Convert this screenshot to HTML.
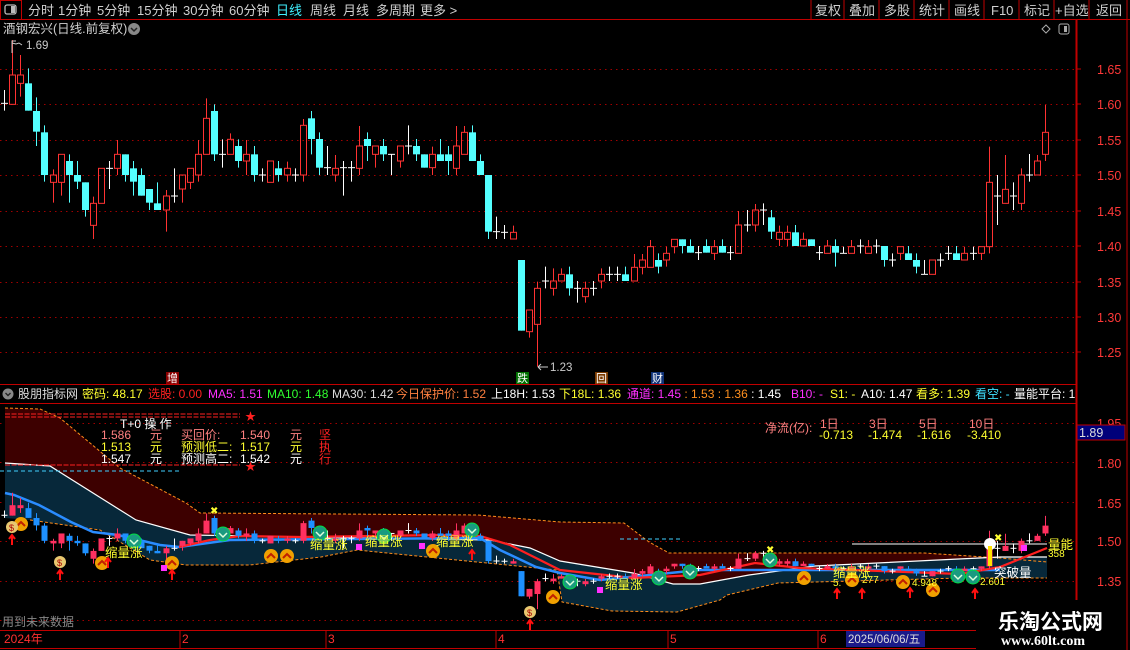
<!DOCTYPE html>
<html><head><meta charset="utf-8">
<style>
html,body{margin:0;padding:0;background:#000;width:1130px;height:650px;overflow:hidden;font-family:"Liberation Sans","Noto Sans CJK SC",sans-serif}
svg{position:absolute;left:0;top:0}
text{font-family:"Liberation Sans","Noto Sans CJK SC",sans-serif}
</style></head><body>
<svg id="s" width="1130" height="650" xmlns="http://www.w3.org/2000/svg">
<rect width="1130" height="650" fill="#000"/>
<line x1="0" y1="19.5" x2="1130" y2="19.5" stroke="#c00000"/>
<rect x="0.5" y="0.5" width="21" height="19" fill="none" stroke="#c00000"/>
<rect x="5" y="5" width="11" height="9" rx="2" fill="none" stroke="#bbb" stroke-width="1.3"/>
<rect x="11" y="6" width="4" height="7" fill="#bbb"/>
<g font-size="13" fill="#d0d0d0">
<text x="28" y="15">分时</text><text x="58" y="15">1分钟</text><text x="97" y="15">5分钟</text><text x="137" y="15">15分钟</text><text x="183" y="15">30分钟</text><text x="229" y="15">60分钟</text>
<text x="276" y="15" fill="#40f0ff">日线</text><text x="310" y="15">周线</text><text x="343" y="15">月线</text><text x="376" y="15">多周期</text><text x="420" y="15">更多 &gt;</text>
<text x="815" y="15">复权</text><text x="849" y="15">叠加</text><text x="884" y="15">多股</text><text x="919" y="15">统计</text><text x="954" y="15">画线</text><text x="991" y="15">F10</text><text x="1024" y="15">标记</text><text x="1055" y="15">+自选</text><text x="1096" y="15">返回</text>
</g>
<g stroke="#c00000"><line x1="811" y1="0" x2="811" y2="19"/><line x1="844" y1="0" x2="844" y2="19"/><line x1="879" y1="0" x2="879" y2="19"/><line x1="914" y1="0" x2="914" y2="19"/><line x1="949" y1="0" x2="949" y2="19"/><line x1="984" y1="0" x2="984" y2="19"/><line x1="1019" y1="0" x2="1019" y2="19"/><line x1="1054" y1="0" x2="1054" y2="19"/><line x1="1089" y1="0" x2="1089" y2="19"/><line x1="1127" y1="0" x2="1127" y2="650"/></g>
<text x="3" y="33" font-size="12.5" fill="#d0d0d0">酒钢宏兴(日线.前复权)</text>
<circle cx="134" cy="29" r="6" fill="#888"/><path d="M131 28l3 3 3-3" stroke="#222" stroke-width="1.5" fill="none"/>
<path d="M1042 29l4-4 4 4-4 4z" fill="none" stroke="#aaa"/>
<rect x="1059" y="24" width="10" height="10" rx="2" fill="none" stroke="#aaa"/><rect x="1064" y="26" width="3" height="6" fill="#aaa"/>
<line x1="1076.5" y1="20" x2="1076.5" y2="628" stroke="#c00000" stroke-width="2"/>
<g id="grid" stroke="#a00000" stroke-dasharray="1.5,4"></g>
<g font-size="12.5" fill="#ff3838">
<text x="1097" y="74">1.65</text><text x="1097" y="109">1.60</text><text x="1097" y="145">1.55</text><text x="1097" y="180">1.50</text><text x="1097" y="216">1.45</text><text x="1097" y="251">1.40</text><text x="1097" y="287">1.35</text><text x="1097" y="322">1.30</text><text x="1097" y="357">1.25</text>
<text x="1097" y="428">1.95</text><text x="1097" y="468">1.80</text><text x="1097" y="508">1.65</text><text x="1097" y="546">1.50</text><text x="1097" y="586">1.35</text>
</g>
<g stroke="#c00000"><line x1="1077" y1="69" x2="1081" y2="69"/><line x1="1077" y1="104" x2="1081" y2="104"/><line x1="1077" y1="140" x2="1081" y2="140"/><line x1="1077" y1="175" x2="1081" y2="175"/><line x1="1077" y1="211" x2="1081" y2="211"/><line x1="1077" y1="246" x2="1081" y2="246"/><line x1="1077" y1="282" x2="1081" y2="282"/><line x1="1077" y1="317" x2="1081" y2="317"/><line x1="1077" y1="352" x2="1081" y2="352"/></g>
<rect x="1077" y="425" width="48" height="15" fill="#00007a" stroke="#c00000"/>
<text x="1079" y="437" font-size="12.5" fill="#ddd">1.89</text>
<polygon fill="#3d0000" points="5,408 40,409 60,418 120,468 186,503 200,513 478,515 560,522 624,523 649,542 669,553 924,553 1000,558 1047,562 1047,557 1000,557 815,566 749,575 700,584 673,584 633,573 560,561 530,548 490,540 190,535 136,520 50,466 5,463"/>
<polygon fill="#07283a" points="5,463 50,466 136,520 190,535 490,540 530,548 560,561 633,573 673,584 700,584 749,575 815,566 1000,557 1047,557 1047,578 960,578 815,582 778,583 727,595 720,600 677,612 612,611 562,602 557,570 357,550 321,557 250,565 186,565 150,560 100,530 30,520 5,518"/>
<polyline fill="none" stroke="#ff8c1a" stroke-width="1" stroke-dasharray="3,2" points="5,408 40,409 60,418 120,468 186,503 200,513 478,515 560,522 624,523 649,542 669,553 924,553 1000,558 1047,562"/>
<polyline fill="none" stroke="#ff8c1a" stroke-width="1" stroke-dasharray="3,2" points="30,520 100,530 150,560 186,565 250,565 321,557 357,550 557,570 562,602 612,611 677,612 720,600 727,595 778,583 815,582 960,578 1047,578"/>
<polyline fill="none" stroke="#fff" stroke-width="1.2" points="5,463 50,466 136,520 190,535 490,540 530,548 560,561 633,573 673,584 700,584 749,575 815,566 1000,557 1047,557"/>
<polyline fill="none" stroke="#2a8cff" stroke-width="2.5" points="5,493 14,495 39,505 71,522 93,532 118,535 160,545 179,547 230,540 480,538 500,550 536,567 560,573 600,580 640,576 700,570 1000,570"/>
<polyline fill="none" stroke="#ff2020" stroke-width="2.2" points="179,547 210,540 240,536 300,537 440,535 480,536 510,545 560,570 633,578 700,575 755,563 800,568 960,574 1000,567 1047,548"/>
<line x1="5" y1="414" x2="240" y2="414" stroke="#ff2020" stroke-dasharray="5,1.5"/><line x1="5" y1="417" x2="240" y2="417" stroke="#ff2020" stroke-dasharray="5,1.5"/>
<line x1="5" y1="465" x2="240" y2="465" stroke="#ff2020" stroke-dasharray="5,1.5"/>
<text x="245" y="420" font-size="11" fill="#ff2020">★</text><text x="245" y="470" font-size="11" fill="#ff2020">★</text>
<line x1="0" y1="471" x2="180" y2="471" stroke="#40d0ff" stroke-dasharray="4,3"/>
<line x1="620" y1="539" x2="680" y2="539" stroke="#40d0ff" stroke-dasharray="4,3"/>
<line x1="852" y1="544" x2="1047" y2="544" stroke="#fff"/>
<g id="cand"></g>
<g id="low"></g>
<g id="icons"></g>
<g font-size="12.5" fill="#ffff30">
<text x="105" y="557">缩量涨</text><text x="310" y="549">缩量涨</text><text x="365" y="546">缩量涨</text><text x="436" y="546">缩量涨</text><text x="605" y="589">缩量涨</text><text x="833" y="577">缩量涨</text><text x="1048" y="549">量能</text>
<text x="1048" y="557" font-size="10">358</text>
<text x="833" y="586" font-size="10">5.</text><text x="862" y="583" font-size="10">277</text><text x="912" y="586" font-size="10">4.948</text><text x="980" y="585" font-size="10">2.601</text>
</g>
<text x="994" y="577" font-size="12.5" fill="#fff">突破量</text>
<circle cx="990" cy="544" r="6" fill="#fff"/>
<rect x="988" y="546" width="4" height="20" fill="#ffe000"/>
<line x1="0" y1="384.5" x2="1076" y2="384.5" stroke="#c00000"/>
<line x1="0" y1="403.5" x2="1076" y2="403.5" stroke="#c00000"/>
<circle cx="8" cy="394" r="5.5" fill="#888"/><path d="M5.5 393l2.5 2.5 2.5-2.5" stroke="#222" stroke-width="1.4" fill="none"/>
<g font-size="12">
<text x="18" y="398" fill="#ddd">股朋指标网</text>
<text x="82" y="398" fill="#ffff30">密码: 48.17</text>
<text x="148" y="398" fill="#ff2020">选股: 0.00</text>
<text x="208" y="398" fill="#ff30ff">MA5: 1.51</text>
<text x="267" y="398" fill="#30ff30">MA10: 1.48</text>
<text x="332" y="398" fill="#ddd">MA30: 1.42</text>
<text x="396" y="398" fill="#ff8040">今日保护价: 1.52</text>
<text x="491" y="398" fill="#fff">上18H: 1.53</text>
<text x="559" y="398" fill="#ffff30">下18L: 1.36</text>
<text x="627" y="398" fill="#ff30ff">通道: <tspan fill="#ff30ff">1.45</tspan><tspan fill="#ff9020"> : 1.53 : 1.36</tspan><tspan fill="#fff"> : 1.45</tspan></text>
<text x="791" y="398" fill="#ff30ff">B10: -</text>
<text x="830" y="398" fill="#ffff30">S1: -</text>
<text x="861" y="398" fill="#fff">A10: 1.47</text>
<text x="916" y="398" fill="#ffff30">看多: 1.39</text>
<text x="975" y="398" fill="#40e0ff">看空: -</text>
<text x="1014" y="398" fill="#fff">量能平台: 1</text>
</g>
<g font-size="12">
<text x="120" y="428" fill="#fff">T+0 操 作</text>
<text x="101" y="439" fill="#ff8080">1.586</text><text x="150" y="439" fill="#ff8080">元</text><text x="181" y="439" fill="#ff8080">买回价:</text><text x="240" y="439" fill="#ff8080">1.540</text><text x="290" y="439" fill="#ff8080">元</text><text x="319" y="439" fill="#ff2020">坚</text>
<text x="101" y="451" fill="#ffff30">1.513</text><text x="150" y="451" fill="#ffff30">元</text><text x="181" y="451" fill="#ffff30">预测低二:</text><text x="240" y="451" fill="#ffff30">1.517</text><text x="290" y="451" fill="#ffff30">元</text><text x="319" y="451" fill="#ff2020">执</text>
<text x="101" y="463" fill="#fff">1.547</text><text x="150" y="463" fill="#fff">元</text><text x="181" y="463" fill="#fff">预测高二:</text><text x="240" y="463" fill="#fff">1.542</text><text x="290" y="463" fill="#fff">元</text><text x="319" y="463" fill="#ff2020">行</text>
<text x="765" y="432" fill="#ff8080">净流(亿):</text>
<text x="820" y="428" fill="#ff8080">1日</text><text x="869" y="428" fill="#ff8080">3日</text><text x="919" y="428" fill="#ff8080">5日</text><text x="969" y="428" fill="#ff8080">10日</text>
<text x="819" y="439" fill="#ffff30">-0.713</text><text x="868" y="439" fill="#ffff30">-1.474</text><text x="917" y="439" fill="#ffff30">-1.616</text><text x="967" y="439" fill="#ffff30">-3.410</text>
</g>
<text x="2" y="626" font-size="12" fill="#888">用到未来数据</text>
<text x="26" y="49" font-size="11.5" fill="#ccc">1.69</text><path d="M12 53V41h4m-4 2l4 1 3-1 3 2" stroke="#ccc" fill="none"/>
<text x="550" y="371" font-size="11.5" fill="#ccc">1.23</text><path d="M538 367h10m-10 0l3-3m-3 3l3 3" stroke="#ccc" fill="none"/>
<rect x="166" y="372" width="13" height="12" fill="#8b0000"/><text x="167" y="382" font-size="11" fill="#fff">增</text>
<rect x="516" y="372" width="13" height="12" fill="#007000"/><text x="517" y="382" font-size="11" fill="#fff">跌</text>
<rect x="595" y="372" width="13" height="12" fill="#7a3a00"/><text x="596" y="382" font-size="11" fill="#fff">回</text>
<rect x="651" y="372" width="13" height="12" fill="#113377"/><text x="652" y="382" font-size="11" fill="#fff">财</text>
<line x1="0" y1="630.5" x2="976" y2="630.5" stroke="#c00000"/>
<line x1="0" y1="648.5" x2="976" y2="648.5" stroke="#c00000"/>
<g stroke="#c00000"><line x1="180" y1="631" x2="180" y2="648"/><line x1="326" y1="631" x2="326" y2="648"/><line x1="496" y1="631" x2="496" y2="648"/><line x1="668" y1="631" x2="668" y2="648"/><line x1="818" y1="631" x2="818" y2="648"/></g>
<g font-size="12" fill="#ff3030"><text x="4" y="643">2024年</text><text x="182" y="643">2</text><text x="328" y="643">3</text><text x="498" y="643">4</text><text x="670" y="643">5</text><text x="820" y="643">6</text></g>
<rect x="846" y="631" width="79" height="16" fill="#1a1a8a"/><text x="848" y="643" font-size="11.5" fill="#ddd">2025/06/06/五</text>
<rect x="978" y="600" width="148" height="50" fill="#000"/>
<text x="998" y="629" font-size="21" font-weight="bold" fill="#fff">乐淘公式网</text>
<text x="1001" y="645" font-size="14" font-weight="bold" fill="#fff" style="font-family:'Liberation Serif',serif">www.60lt.com</text>
</svg>
<script>
var NS="http://www.w3.org/2000/svg";
function el(p,t,a){var e=document.createElementNS(NS,t);for(var k in a)e.setAttribute(k,a[k]);p.appendChild(e);return e;}
var g=document.getElementById('grid');
[69,104,140,175,211,246,282,317,352,423,462,502,541,581,620].forEach(function(y){el(g,'line',{x1:0,y1:y+.5,x2:1075,y2:y+.5});});
var D=[
['w',190,190,150,212],['r',105,193,0,193],['r',105,130,45,170],['c',130,212,85,212],['c',213,275,172,318],['c',277,405,256,425],['r',405,427,388,488],['r',343,427,343,467],['c',363,405,343,488],['c',405,425,363,447],
['c',427,510,427,530],['r',490,556,470,597],['r',385,490,385,490],['w',385,385,363,447],['r',343,385,300,405],['c',343,405,343,425],['c',385,425,363,467],['c',405,467,385,467],['c',447,488,447,510],['c',490,510,427,510],
['r',468,510,450,575],['w',468,468,385,488],['r',405,447,405,488],['r',385,427,385,447],['r',343,405,300,425],['r',235,343,175,343],['c',213,343,193,363],['w',343,343,298,383],['r',298,343,280,343],['c',318,363,298,383],
['r',343,363,300,405],['c',343,405,318,425],['w',405,405,385,425],['r',363,427,363,427],['c',385,405,363,425],['r',385,405,365,425],['w',405,405,385,425],['r',256,405,237,425],['c',235,297,213,343],['c',297,383,277,405],
['w',383,383,318,405],['r',385,405,345,425],['w',383,383,363,467],['w',383,383,363,425],['r',318,385,258,405],['c',297,318,277,363],['r',318,343,318,383],['c',318,343,297,363],['w',343,343,343,405],['r',318,363,318,383],
['w',318,318,256,343],['c',318,343,297,363],['c',343,383,343,383],['r',343,383,320,405],['c',343,363,297,363],['c',343,363,318,405],['r',318,385,258,405],['r',277,343,258,343],['c',277,363,256,363],['c',363,405,343,405],
['c',405,575,405,597],['w',575,575,530,597],['w',577,577,555,597],['r',577,597,557,597],['c',660,872,660,872],['r',810,875,810,893],['r',745,853,725,980],
['w',723,723,680,745],['r',723,745,685,767],['r',703,723,685,723],['c',703,745,680,767],['w',745,745,723,788],['r',745,770,725,788],['w',745,745,723,767],['r',703,723,685,745],['w',703,703,680,723],['w',703,703,680,723],
['c',703,723,680,723],['r',682,723,642,723],['r',660,682,642,703],['r',620,682,600,682],['c',660,680,640,700],['r',640,660,620,680],['r',598,620,598,640],['c',598,618,598,640],['c',618,638,598,638],['w',638,638,618,660],
['c',618,638,598,638],['r',620,640,600,660],['c',618,638,598,638],['w',638,638,618,660],['r',555,640,513,640],['w',555,555,510,575],['r',510,555,492,575],['w',510,510,490,555],['c',532,575,510,597],['r',577,598,557,618],
['r',577,598,557,618],['c',577,618,555,618],['r',598,618,578,618],['c',598,618,598,618],['w',638,638,618,660],['r',618,640,600,640],['c',618,638,598,680],['w',640,640,620,640],['r',620,640,600,640],['w',618,618,598,640],
['r',620,640,600,640],['w',618,618,598,640],['c',618,660,618,680],['w',660,660,640,680],['r',620,640,620,660],['c',640,660,618,660],['c',660,680,640,700],['w',703,703,660,703],['r',660,703,660,703],['w',660,660,640,680],
['w',640,640,618,660],['c',640,660,618,660],['r',640,660,620,660],['w',640,640,620,660],['r',620,640,620,660],['r',427,620,320,640],['w',468,468,405,555],['r',448,490,345,490],['w',468,468,427,510],['r',405,490,385,510],
['w',405,405,342,425],['r',363,405,345,405],['r',277,343,195,363]];
var cg=document.getElementById('cand'),lg=document.getElementById('low');
var col={r:'#ff3232',c:'#54ffff',w:'#ffffff'};
var lcol={r:'#ff3060',c:'#1e90ff',w:'#ffffff'};
D.forEach(function(d,i){
  var x=Math.round(4.1+i*8.07)+.5;
  var Y=function(z){return z/3+40;};
  var t=Y(d[1]),b=Y(d[2]),h=Y(d[3]),l=Y(d[4]),c=col[d[0]];
  if(d[0]=='r'){el(cg,'line',{x1:x,y1:h,x2:x,y2:t,stroke:c});el(cg,'line',{x1:x,y1:b,x2:x,y2:l,stroke:c});el(cg,'rect',{x:x-3,y:t,width:6,height:Math.max(b-t,1),fill:'none',stroke:c});}
  else if(d[0]=='c'){el(cg,'line',{x1:x,y1:h,x2:x,y2:l,stroke:c});el(cg,'rect',{x:x-3.5,y:t,width:7,height:Math.max(b-t,1),fill:c});}
  else{el(cg,'line',{x1:x,y1:h,x2:x,y2:l,stroke:c});el(cg,'line',{x1:x-3.5,y1:t,x2:x+3.5,y2:t,stroke:c});}
  var L=function(y){return 503.05+(y-69)*0.3563;};
  var lt=L(t),lb=L(b),lh=L(h),ll=L(l),lc=lcol[d[0]];
  el(lg,'line',{x1:x,y1:lh,x2:x,y2:ll,stroke:lc});
  if(d[0]=='w')el(lg,'line',{x1:x-3,y1:lt,x2:x+3,y2:lt,stroke:lc});
  else el(lg,'rect',{x:x-3,y:lt,width:6,height:Math.max(lb-lt,1.5),fill:lc});
});
var ig=document.getElementById('icons');
function coin(x,y){el(ig,'circle',{cx:x,cy:y,r:7,fill:'#f0a000'});el(ig,'path',{d:'M'+(x-4)+' '+(y+2)+'l4-4 4 4',stroke:'#c02000','stroke-width':2,fill:'none'});}
function badge(x,y){el(ig,'circle',{cx:x,cy:y,r:7,fill:'#1a9a80',stroke:'#0d4'});el(ig,'path',{d:'M'+(x-4)+' '+(y-1)+'l4 4 4-4',stroke:'#dfd','stroke-width':1.5,fill:'none'});}
function bag(x,y){el(ig,'circle',{cx:x,cy:y,r:6,fill:'#e8c870'});el(ig,'text',{x:x-3,y:y+4,'font-size':9,fill:'#a00'}).textContent='$';}
function arrow(x,y){el(ig,'path',{d:'M'+x+' '+(y+10)+'V'+y+'m-3 4l3-4 3 4',stroke:'#ff1010','stroke-width':2,fill:'none'});}
[[21,524],[102,563],[172,563],[271,556],[287,556],[433,551],[553,597],[804,578],[852,580],[903,582],[933,590]].forEach(function(p){coin(p[0],p[1]);});
[[134,541],[223,534],[320,533],[384,536],[472,530],[570,582],[659,578],[690,572],[770,560],[958,576],[973,577]].forEach(function(p){badge(p[0],p[1]);});
[[12,527],[60,562],[530,612]].forEach(function(p){bag(p[0],p[1]);});
[[12,535],[60,570],[108,558],[172,570],[472,550],[530,620],[837,589],[862,589],[910,588],[975,589]].forEach(function(p){arrow(p[0],p[1]);});
[[214,510],[770,549],[998,537]].forEach(function(p){el(ig,'text',{x:p[0]-4,y:p[1]+4,'font-size':10,fill:'#ffff30'}).textContent='✖';});
[[164,568],[600,590],[359,547],[422,546],[1024,548]].forEach(function(p){el(ig,'rect',{x:p[0]-3,y:p[1]-3,width:6,height:6,fill:'#ff30ff'});});
</script>
</body></html>
